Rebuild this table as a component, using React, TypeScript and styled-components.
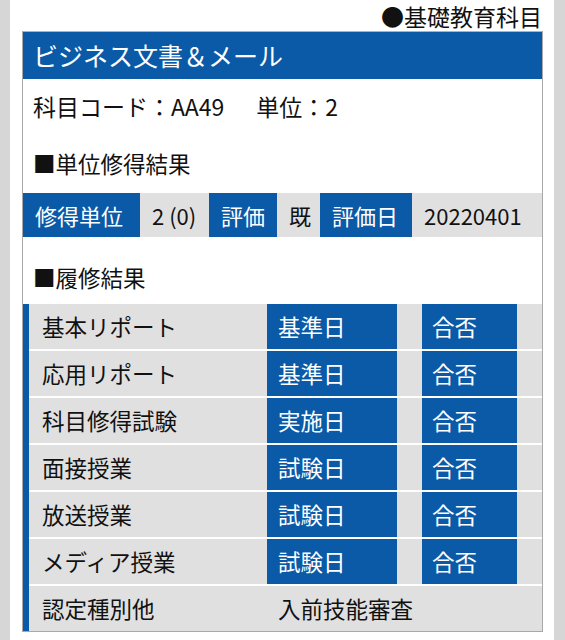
import React from "react";
import styled, { createGlobalStyle } from "styled-components";

const BLUE = "#0a5aa8";
const GRAY = "#e0e0e0";

const Global = createGlobalStyle`
  html, body { margin: 0; padding: 0; }
  body {
    background: #d6d6d6;
    font-family: "Noto Sans CJK JP", "Noto Sans", sans-serif;
    color: #111;
  }
`;

const Page = styled.div`
  margin: 0 11px 0 10px;
  background: #fff;
  min-height: 640px;
  padding: 0 11px 7px 12px;
  box-sizing: border-box;
`;

const Category = styled.div`
  text-align: right;
  font-size: 23px;
  line-height: 30px;
  height: 31px;
  padding-top: 1px;
  box-sizing: border-box;
  padding-right: 1px;
`;

const Card = styled.div`
  border: 1px solid #a8a8a8;
  border-top: 1px solid #9fb6d0;
  background: #fff;
`;

const Header = styled.div`
  background: ${BLUE};
  color: #fff;
  font-size: 25px;
  line-height: 47px;
  height: 47px;
  padding-left: 10px;
`;

const Line = styled.div<{ $top: number; $size?: number }>`
  font-size: ${(p) => p.$size ?? 22.5}px;
  line-height: 28px;
  padding-left: 10px;
  margin-top: ${(p) => p.$top}px;
`;

const Gap = styled.span`
  display: inline-block;
  width: 32px;
`;

const Summary = styled.div`
  display: flex;
  margin-top: 16px;
  background: ${GRAY};
  height: 44px;
  font-size: 22px;
  line-height: 44px;
`;

const SumCell = styled.div<{ $head?: boolean; $w: number }>`
  width: ${(p) => p.$w}px;
  box-sizing: border-box;
  padding-left: 12px;
  white-space: nowrap;
  background: ${(p) => (p.$head ? BLUE : "transparent")};
  color: ${(p) => (p.$head ? "#fff" : "#111")};
`;

const Table = styled.div`
  display: flex;
  margin-top: 13px;
`;

const SideBar = styled.div`
  width: 6px;
  background: ${BLUE};
  flex: none;
`;

const Rows = styled.div`
  flex: 1;
  display: flex;
  flex-direction: column;
  gap: 2px;
  background: #fff;
`;

const Row = styled.div`
  display: grid;
  grid-template-columns: 238px 130px 25px 95px 1fr;
  height: 45px;
  background: ${GRAY};
  font-size: 22.5px;
  line-height: 45px;
`;

const Label = styled.div`
  padding-left: 13px;
  white-space: nowrap;
`;

const BlueCell = styled.div<{ $pad: number }>`
  background: ${BLUE};
  color: #fff;
  padding-left: ${(p) => p.$pad}px;
  white-space: nowrap;
`;

const Spacer = styled.div``;

const WideCell = styled.div`
  grid-column: 2 / -1;
  padding-left: 11px;
  white-space: nowrap;
`;

const rows: [string, string][] = [
  ["基本リポート", "基準日"],
  ["応用リポート", "基準日"],
  ["科目修得試験", "実施日"],
  ["面接授業", "試験日"],
  ["放送授業", "試験日"],
  ["メディア授業", "試験日"],
];

export default function App() {
  return (
    <>
      <Global />
      <Page>
        <Category>●基礎教育科目</Category>
        <Card>
          <Header>ビジネス文書＆メール</Header>
          <Line $top={13} $size={23}>
            科目コード：AA49<Gap />単位：2
          </Line>
          <Line $top={29}>■単位修得結果</Line>
          <Summary>
            <SumCell $head $w={117}>修得単位</SumCell>
            <SumCell $w={69}>2 (0)</SumCell>
            <SumCell $head $w={68}>評価</SumCell>
            <SumCell $w={43}>既</SumCell>
            <SumCell $head $w={92}>評価日</SumCell>
            <SumCell $w={130}>20220401</SumCell>
          </Summary>
          <Line $top={26}>■履修結果</Line>
          <Table>
            <SideBar />
            <Rows>
              {rows.map(([label, date], i) => (
                <Row key={i}>
                  <Label>{label}</Label>
                  <BlueCell $pad={11}>{date}</BlueCell>
                  <Spacer />
                  <BlueCell $pad={10}>合否</BlueCell>
                  <Spacer />
                </Row>
              ))}
              <Row>
                <Label>認定種別他</Label>
                <WideCell>入前技能審査</WideCell>
              </Row>
            </Rows>
          </Table>
        </Card>
      </Page>
    </>
  );
}
